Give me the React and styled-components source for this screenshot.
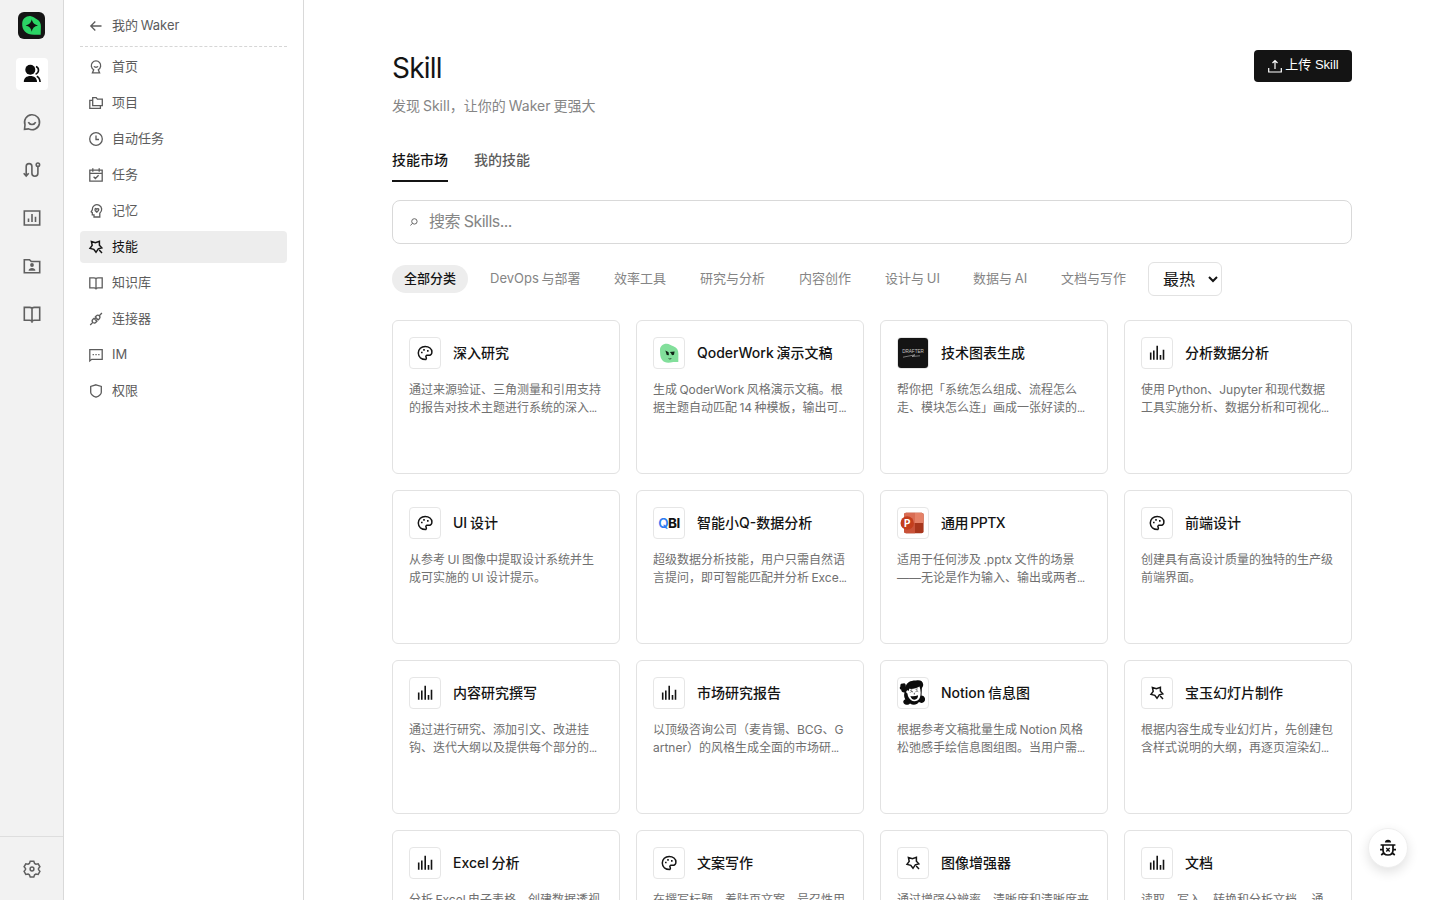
import styled, { createGlobalStyle, css } from "styled-components";

const GlobalStyle = createGlobalStyle`
    * {
        box-sizing: border-box;
    }
    body {
        margin: 0;
        height: 900px;
        overflow: hidden;
        background-color: #ffffff;
        color: #141414;
        font-family: Inter, 'Noto Sans CJK SC', sans-serif;
        word-spacing: -1px;
    }
    button, select, input {
        font-family: inherit;
    }
    h1, h3, p {
        margin: 0;
        font-weight: 400;
    }
`

const menu = [
    { icon: "home", label: "首页" },
    { icon: "folders", label: "项目" },
    { icon: "clock", label: "自动任务" },
    { icon: "calendar", label: "任务" },
    { icon: "memory", label: "记忆" },
    { icon: "skill", label: "技能" },
    { icon: "book", label: "知识库" },
    { icon: "plug", label: "连接器" },
    { icon: "im", label: "IM" },
    { icon: "shield", label: "权限" },
]

const categories = [
    { label: "全部分类" },
    { label: "DevOps 与部署", width: 114 },
    { label: "效率工具" },
    { label: "研究与分析" },
    { label: "内容创作" },
    { label: "设计与 UI", width: 78 },
    { label: "数据与 AI", width: 78 },
    { label: "文档与写作" },
]

const skills = [
    { icon: "palette", title: "深入研究", lines: ["通过来源验证、三角测量和引用支持", "的报告对技术主题进行系统的深入…"] },
    { icon: "qoder", title: "QoderWork 演示文稿", lines: ["生成 QoderWork 风格演示文稿。根", "据主题自动匹配 14 种模板，输出可…"] },
    { icon: "drafter", title: "技术图表生成", lines: ["帮你把「系统怎么组成、流程怎么", "走、模块怎么连」画成一张好读的…"] },
    { icon: "bars", title: "分析数据分析", lines: ["使用 Python、Jupyter 和现代数据", "工具实施分析、数据分析和可视化…"] },
    { icon: "palette", title: "UI 设计", lines: ["从参考 UI 图像中提取设计系统并生", "成可实施的 UI 设计提示。"] },
    { icon: "qbi", title: "智能小Q-数据分析", lines: ["超级数据分析技能，用户只需自然语", "言提问，即可智能匹配并分析 Exce…"] },
    { icon: "ppt", title: "通用 PPTX", tight: true, lines: ["适用于任何涉及 .pptx 文件的场景", "——无论是作为输入、输出或两者…"] },
    { icon: "palette", title: "前端设计", lines: ["创建具有高设计质量的独特的生产级", "前端界面。"] },
    { icon: "bars", title: "内容研究撰写", lines: ["通过进行研究、添加引文、改进挂", "钩、迭代大纲以及提供每个部分的…"] },
    { icon: "bars", title: "市场研究报告", lines: ["以顶级咨询公司（麦肯锡、BCG、G", "artner）的风格生成全面的市场研…"] },
    { icon: "notion", title: "Notion 信息图", lines: ["根据参考文稿批量生成 Notion 风格", "松弛感手绘信息图组图。当用户需…"] },
    { icon: "skill", title: "宝玉幻灯片制作", lines: ["根据内容生成专业幻灯片，先创建包", "含样式说明的大纲，再逐页渲染幻…"] },
    { icon: "bars", title: "Excel 分析", lines: ["分析 Excel 电子表格，创建数据透视"] },
    { icon: "palette", title: "文案写作", lines: ["在撰写标题、着陆页文案、号召性用"] },
    { icon: "skill", title: "图像增强器", lines: ["通过增强分辨率、清晰度和清晰度来"] },
    { icon: "bars", title: "文档", lines: ["读取、写入、转换和分析文档 ，通"] },
]

export default function App() {

    return (
        <>
            <GlobalStyle />
            <Page>
                <Rail>
                    <Logo />
                    <RailButton $active><TeamIcon /></RailButton>
                    <RailButton><ChatIcon /></RailButton>
                    <RailButton><RouteIcon /></RailButton>
                    <RailButton><ChartIcon /></RailButton>
                    <RailButton><ContactIcon /></RailButton>
                    <RailButton><BookIcon /></RailButton>
                    <RailFooter>
                        <SettingsIcon />
                    </RailFooter>
                </Rail>

                <Sidebar>
                    <BackLink>
                        <Icon name="back" />
                        <p>我的 Waker</p>
                    </BackLink>
                    <Menu>
                        {menu.map((i) => (
                            <MenuItem key={i.label} $active={i.icon === "skill"}>
                                <Icon name={i.icon} />
                                <p>{i.label}</p>
                            </MenuItem>
                        ))}
                    </Menu>
                </Sidebar>

                <Main>
                    <Header>
                        <div>
                            <Title>Skill</Title>
                            <Subtitle>发现 Skill，让你的 Waker 更强大</Subtitle>
                        </div>
                        <UploadButton>
                            <UploadIcon />
                            <span>上传 Skill</span>
                        </UploadButton>
                    </Header>

                    <Tabs>
                        <Tab $active>技能市场</Tab>
                        <Tab>我的技能</Tab>
                    </Tabs>

                    <Search>
                        <SearchIcon />
                        <input placeholder="搜索 Skills..." />
                    </Search>

                    <Filters>
                        {categories.map((c, idx) => (
                            <Chip key={c.label} $active={idx === 0} $width={c.width}>{c.label}</Chip>
                        ))}
                        <Sort>
                            <option>最热</option>
                        </Sort>
                    </Filters>

                    <Grid>
                        {skills.map((s) => <SkillCard key={s.title} {...s} />)}
                    </Grid>
                </Main>
            </Page>
            <DebugButton><BugIcon /></DebugButton>
        </>
    )
}

function SkillCard({ icon, title, tight, lines }) {

    return (
        <Card>
            <CardHeader>
                <CardIcon><Icon name={icon} /></CardIcon>
                <CardTitle $tight={tight}>{title}</CardTitle>
            </CardHeader>
            {lines.map((l) => (
                <CardText key={l}>
                    {l.replace("…", "")}
                    {l.endsWith("…") && <Dots>…</Dots>}
                </CardText>
            ))}
        </Card>
    )
}

function Icon({ name }) {
    if (name === "qoder") return <QoderIcon />
    if (name === "drafter") return <DrafterIcon />
    if (name === "qbi") return <QbiIcon />
    if (name === "ppt") return <PptIcon />
    if (name === "notion") return <NotionIcon />

    return (
        <svg width="16" height="16" viewBox="0 0 16 16" fill="none" stroke="currentColor" strokeWidth="1.3">
            {shapes[name]}
        </svg>
    )
}

const shapes = {
    back: <path d="M13.5 8H3M7.3 3.5 2.8 8l4.5 4.5" />,
    home: <path d="M5.7 10.7a4.7 4.7 0 1 1 4.6 0l1.3 3.2H4.4zM6 7.2c.8 1.4 3.2 1.4 4 0" />,
    folders: <path d="M4.7 2.6h3.5l1.2 1.5h4.9v6.6H4.7zM4.7 5.4H1.8v7.9h10.6v-2.6" />,
    clock: <path d="M8 1.7a6.3 6.3 0 1 0 0 12.6A6.3 6.3 0 0 0 8 1.7zM8 4.5v4h3" />,
    calendar: <path d="M1.8 3.2h12.4v10.9H1.8zM1.8 6.3h12.4M4.8 1.3v3.5M11.2 1.3v3.5M5.6 9.7l1.8 1.8 3.2-3.2" />,
    memory: (
        <>
            <path d="M6 14v-2.2H4.3V9.6L3.2 8.8l1.1-2a4.7 4.7 0 1 1 7.5 3.4V14z" />
            <path d="M8.8 9.3C7.3 8.3 6.7 7.3 7 6.2c.4-1 1.5-.8 1.8 0 .4-.9 1.7-.9 2 0 .2 1-.5 2-2 3.1z" />
        </>
    ),
    skill: <path strokeWidth="1.5" d="M3.4 2.5 7.4 3.6l4-1.4v4l2.4 2.6-3.5 1.1L8 13.3l-2.2-3L2 9.4l2.2-3zM11.2 11l2.8 2.9" />,
    book: <path d="M8 3.5C7.4 3 6.7 2.8 6 2.8H1.8v10.1H6c.8 0 1.5.2 2 .7.5-.5 1.2-.7 2-.7h4.2V2.8H10c-.7 0-1.4.2-2 .7zM8 3.5v11" />,
    plug: <path d="m2.2 14 2.6-2.6M11.3 4.8 13.9 2M4.8 11.4c-1.2-1.4-.6-2.5.2-3.2l1-.9 2.9 2.9-1 1c-.8.8-2 1.3-3.1.2zM11.3 4.8c1.2 1.3.6 2.4-.2 3.2l-.9.9L7.3 6l.9-1c.9-.9 2-1.2 3.1-.2zM6.8 8.1l1.1-1.2M8.2 9.4l1.2-1.2" />,
    im: <path d="M1.8 2.6h12.4v9.7H3.7l-1.9 1.6zM4.6 7.6h1.3M7.4 7.6h1.3M10.2 7.6h1.3" />,
    shield: <path d="m8 1.8 5.3 1.6v5.8c0 2.2-2.2 3.8-5.3 5-3.1-1.2-5.3-2.8-5.3-5V3.4z" />,
    bars: <path strokeWidth="1.6" d="M1.7 14.8V7.5M4.8 14.8V5.4M8.2 14.8V.7M11.5 14.8V10M14.5 14.8V4.7" />,
    palette: (
        <>
            <path strokeWidth="1.5" d="M8.7 14.6c-4-.2-7.4-2.4-7.4-6.5 0-3.8 3-6.7 6.9-6.7 3.8 0 6.7 2.5 6.7 5.5 0 2-1.5 3.4-3.5 3.4H9.6c-1 .5-.9 1.3-.4 2.1.3.6.1 1.7-.5 2.2z" />
            <path strokeWidth="1.7" d="M4 7.5h1.6M6.2 4.8h1.6M10 5.8h1.6" />
        </>
    ),
}

function Logo() {
    return (
        <LogoBox>
            <svg width="27" height="27" viewBox="0 0 27 27">
                <path fill="#2bd565" d="M4.2 11.5C4.4 6.5 8.5 3.6 13 4.2c2.3.3 4 2 6.2 3.2 2.7 1.6 3.8 4 3.7 7.2l-.2 8.2-5.4-.1c-5.1.1-7.9-.4-10.4-3.2-2-2.1-2.9-4.8-2.7-8z" />
                <path fill="#101010" d="M13.8 7.3c.8 3.6 2.3 5.2 6.2 6.2-3.9 1-5.4 2.5-6.2 6.3-.9-3.8-2.3-5.3-6.2-6.3 3.9-1 5.3-2.6 6.2-6.2z" />
            </svg>
        </LogoBox>
    )
}

function TeamIcon() {
    return (
        <svg width="20" height="20" viewBox="0 0 20 20" fill="#0c0c0c">
            <circle cx="8.3" cy="5.8" r="5" />
            <path d="M1.8 18c0-4 2.7-6 6.6-6s6.6 2 6.6 6z" />
            <path d="M14 2.5c3.4 1.3 3.4 6.4-.4 7.7M14.8 12.3c2.2 1 3 3 3.3 5.7" fill="none" stroke="#0c0c0c" strokeWidth="1.6" />
        </svg>
    )
}

function ChatIcon() {
    return (
        <svg width="20" height="20" viewBox="0 0 20 20" fill="none" stroke="currentColor" strokeWidth="1.6">
            <path d="M2.5 17.3 3 12.8a7.5 7.5 0 1 1 3.6 4.1z" />
            <path d="M6.3 10.2c1.4 3 6 3 7.4 0" />
        </svg>
    )
}

function RouteIcon() {
    return (
        <svg width="20" height="20" viewBox="0 0 20 20" fill="none" stroke="currentColor" strokeWidth="1.6">
            <path d="M4.2 16V6.5c0-3.9 5.7-3.9 5.7 0v6.8c0 3.9 6 3.9 6 0V6.5M1.7 13.2 4.2 16l2.5-2.8" />
            <circle cx="15.9" cy="4.7" r="1.7" />
        </svg>
    )
}

function ChartIcon() {
    return (
        <svg width="20" height="20" viewBox="0 0 20 20" fill="none" stroke="currentColor" strokeWidth="1.6">
            <path d="M2.3 3h15.4v14H2.3zM6.5 14v-3.5M10 14V6M13.5 14V8.7" />
        </svg>
    )
}

function ContactIcon() {
    return (
        <svg width="20" height="20" viewBox="0 0 20 20" fill="none" stroke="currentColor" strokeWidth="1.6">
            <path d="M2.3 3.7h5.2L9.3 5.5h8.4v11.2H2.3z" />
            <circle cx="10" cy="9" r="1.9" fill="currentColor" stroke="none" />
            <path d="M6.6 14.7c0-3.7 6.8-3.7 6.8 0z" fill="currentColor" stroke="none" />
        </svg>
    )
}

function BookIcon() {
    return (
        <svg width="20" height="20" viewBox="0 0 20 20" fill="none" stroke="currentColor" strokeWidth="1.6">
            <path d="M10 4.2c-.7-.6-1.5-.8-2.4-.8H2.3v12.8h5.3c.9 0 1.7.3 2.4.9.7-.6 1.5-.9 2.4-.9h5.3V3.4h-5.3c-.9 0-1.7.2-2.4.8zM10 4.2v14.5" />
        </svg>
    )
}

function SettingsIcon() {
    return (
        <svg width="20" height="20" viewBox="0 0 20 20" fill="none" stroke="currentColor" strokeWidth="1.5">
            <path d="M8.2 2.2h3.6l.8 2.2 1.3.8 2.3-.4 1.7 3-1.4 1.8v1l1.4 1.8-1.7 3-2.3-.4-1.3.8-.8 2.1H8.2l-.8-2.1-1.3-.8-2.3.4-1.7-3 1.4-1.8v-1L2.1 7.8l1.7-3 2.3.4 1.3-.8z" />
            <circle cx="10" cy="10" r="1.9" />
        </svg>
    )
}

function UploadIcon() {
    return (
        <svg width="16" height="16" viewBox="0 0 16 16" fill="none" stroke="currentColor" strokeWidth="1.2">
            <path d="M1.7 10v4h12.6v-4M8 11V2.7M5.5 5 8 2.5 10.5 5" />
        </svg>
    )
}

function SearchIcon() {
    return (
        <svg width="10" height="12" viewBox="0 0 10 12" fill="none" stroke="#666666" strokeWidth="1">
            <circle cx="5.4" cy="5.4" r="2.7" />
            <path d="M3.6 7.3 1.4 9.4" />
        </svg>
    )
}

function BugIcon() {
    return (
        <svg width="20" height="20" viewBox="0 0 20 20" fill="none" stroke="#111111" strokeWidth="1.7">
            <path d="M6.9 4.6a3.1 2.9 0 0 1 6.2 0z" fill="#111111" stroke="none" />
            <path d="M5 7h10v5c0 3-2 5-5 5s-5-2-5-5zM2.6 7h14.8M2 11.7h3M15 11.7h3M3.2 17l2.6-2M16.8 17l-2.6-2" />
            <path strokeWidth="1.4" d="m8.3 10.1 3.4 3.4M11.7 10.1l-3.4 3.4" />
        </svg>
    )
}

function QoderIcon() {
    return (
        <svg width="30" height="30" viewBox="0 0 30 30">
            <path fill="#82df9b" d="M6 12C5.8 8.3 9.2 5.6 12.8 5.8c2.4.2 4 1.5 6.6 2.5 3.5 1.3 5 3.8 5 7.5l-.1 8.1h-5c-5.3 1.4-9.1.8-11.2-2-2.3-3-1.9-6-2.1-9.9z" />
            <path fill="#102316" d="m11.4 12.6 3.2 1.7.3 3-2.2-.4zM15.8 14l4.8-.4-.6 3.2-2 .5-1-2z" />
            <path fill="none" stroke="#102316" strokeWidth=".8" d="M14.6 20.5c1.2.8 2.2.5 2.9-.5" />
        </svg>
    )
}

function DrafterIcon() {
    return (
        <DarkTile>
            <span>DRAFTER</span>
            <svg width="20" height="4" viewBox="0 0 20 4" fill="none" stroke="#bdbdbd" strokeWidth=".6">
                <path d="M0 3.2 12 .8 9 2.5l8-.7" />
            </svg>
        </DarkTile>
    )
}

function QbiIcon() {
    return (
        <QbiText>
            <b>Q</b>BI
        </QbiText>
    )
}

function PptIcon() {
    return (
        <PptTile>
            <svg width="26" height="24" viewBox="0 0 26 24">
                <rect x="4" y="1.7" width="19.6" height="20.6" rx="2" fill="#a8361c" />
                <path d="M4 3.7a2 2 0 0 1 2-2h9V12H4z" fill="#d96d54" />
                <path d="M15 1.7h6.6a2 2 0 0 1 2 2V12H15z" fill="#e58268" />
                <path d="M4 12h11v10.3H6a2 2 0 0 1-2-2z" fill="#c95238" />
                <circle cx="7.2" cy="12" r="6.7" fill="#c43e1c" />
            </svg>
            <span>P</span>
        </PptTile>
    )
}

function NotionIcon() {
    return (
        <svg width="30" height="30" viewBox="0 0 30 30">
            <path fill="#0b0b0b" d="M7.6 9C8.4 4.4 13 2.4 18 2.6c4-.9 7 .6 7.2 4 .2 1.6-.7 2.7-1.3 3.4l-.4 7.6c2.6.2 4.2 2.6 3.4 5-.9 2.4-3.9 3-6 1.5-2 3.1-6 3.5-8.9 1.4-1.2 1.7-4.7 1.8-6.3-.2-1-1.6-.3-3.6 1.6-4.1-1.3-2-1.5-4.6-.8-6.8C4.700 14.600 3 13.200 3.300 11.700 1.600 11.300 1.200 9.200 2.500 8.200 1.800 6.500 3.500 5 5 5.800 6.400 4.500 8.500 6.100 7.600 9z" />
            <path fill="#fff" d="M11.200 10.800c3.800.4 7.400-.5 10.300-2.400 1.400 4 1.700 8.400.2 11.500-1.600 3.300-5.900 4.300-8.800 2.100-2.200-1.600-3.300-4-3.400-6.400-1.500-.5-1.700-2.800-.3-3.200.9-.2 1.500.2 1.600.9z" />
            <path d="M12.200 14.500c.7-1.100 2-1.200 2.800-.4M17.600 13.700c.7-.9 1.900-.9 2.600-.1M16.300 14.800v1.700M12.300 12.400l1.900-.6M17.700 11.400l1.900-.5" fill="none" stroke="#0b0b0b" strokeWidth=".7" />
            <path fill="#0b0b0b" d="M12.400 18c2.600.4 5.300.1 7.700-.8 0 2.500-1.400 4.400-3.600 4.500-2 0-3.500-1.500-4.100-3.700z" />
        </svg>
    )
}

const Page = styled.div`
    display: flex;
    height: 900px;
`

const Rail = styled.div`
    width: 64px;
    flex-shrink: 0;
    display: flex;
    flex-direction: column;
    align-items: center;
    gap: 16px;
    padding-top: 12px;
    background-color: #f2f2f2;
    border-right: 1px solid #d9d9d9;
`

const LogoBox = styled.div`
    width: 27px;
    height: 27px;
    border-radius: 6px;
    background-color: #151515;
    margin-bottom: 3px;
`

const RailButton = styled.div`
    width: 32px;
    height: 32px;
    display: flex;
    align-items: center;
    justify-content: center;
    border-radius: 4px;
    color: #606060;
    background-color: ${props => props.$active ? "#ffffff" : "transparent"};
`

const RailFooter = styled.div`
    margin-top: auto;
    width: 100%;
    height: 64px;
    display: flex;
    align-items: center;
    justify-content: center;
    border-top: 1px solid #dedede;
    color: #606060;
`

const Sidebar = styled.div`
    width: 240px;
    flex-shrink: 0;
    padding: 5px 16px;
    border-right: 1px solid #d9d9d9;
`

const row = css`
    display: flex;
    align-items: center;
    gap: 8px;
    padding: 0 8px;
    font-size: 13px;
    color: #5c5c5c;
    p {
        height: 20px;
        line-height: 18px;
    }
`

const BackLink = styled.div`
    ${row}
    height: 42px;
    border-bottom: 1px dashed #d6d6d6;
`

const Menu = styled.div`
    display: flex;
    flex-direction: column;
    gap: 4px;
    margin-top: 4px;
`

const MenuItem = styled.div`
    ${row}
    height: 32px;
    border-radius: 4px;
    ${props => props.$active && css`
        color: #141414;
        background-color: #ededed;
    `}
`

const Main = styled.div`
    width: 960px;
    margin-left: 88px;
    padding-top: 50px;
`

const Header = styled.div`
    display: flex;
    justify-content: space-between;
    align-items: flex-start;
    height: 94px;
`

const Title = styled.h1`
    font-size: 28px;
    line-height: 36px;
    letter-spacing: -0.8px;
`

const Subtitle = styled.p`
    margin-top: 10px;
    font-size: 14px;
    line-height: 20px;
    color: #858585;
`

const UploadButton = styled.button`
    width: 98px;
    height: 32px;
    display: flex;
    align-items: center;
    justify-content: center;
    gap: 2px;
    padding: 0;
    border: none;
    border-radius: 4px;
    background-color: #141414;
    color: #ffffff;
    font-family: 'Liberation Sans', 'Noto Sans CJK SC', sans-serif;
    font-size: 13px;
    span {
        height: 20px;
        line-height: 18px;
    }
`

const Tabs = styled.div`
    display: flex;
    gap: 26px;
    height: 38px;
`

const Tab = styled.div`
    height: 38px;
    padding-top: 6px;
    font-size: 14px;
    font-weight: 500;
    line-height: 20px;
    color: ${props => props.$active ? "#141414" : "#5c5c5c"};
    border-bottom: 2px solid ${props => props.$active ? "#141414" : "transparent"};
`

const Search = styled.div`
    display: flex;
    align-items: center;
    gap: 10px;
    height: 44px;
    margin-top: 18px;
    padding: 0 16px;
    border: 1px solid #d9d9d9;
    border-radius: 8px;
    input {
        flex: 1;
        padding: 0 0 2px;
        border: none;
        outline: none;
        font-size: 16px;
        letter-spacing: -0.55px;
    }
    input::placeholder {
        color: #858585;
    }
`

const Filters = styled.div`
    display: flex;
    align-items: center;
    gap: 10px;
    height: 34px;
    margin-top: 18px;
`

const Chip = styled.div`
    width: ${props => props.$width ? props.$width + "px" : "auto"};
    height: 28px;
    padding: 0 12px;
    border-radius: 14px;
    font-size: 13px;
    line-height: 27px;
    white-space: nowrap;
    color: ${props => props.$active ? "#141414" : "#858585"};
    font-weight: ${props => props.$active ? 500 : 400};
    background-color: ${props => props.$active ? "#ededed" : "transparent"};
`

const Sort = styled.select`
    width: 74px;
    height: 34px;
    padding: 0 0 0 10px;
    border: 1px solid #e2e2e2;
    border-radius: 6px;
    background-color: #ffffff;
    color: #141414;
    font-size: 16px;
`

const Grid = styled.div`
    display: grid;
    grid-template-columns: repeat(4, 228px);
    grid-auto-rows: 154px;
    gap: 16px;
    margin-top: 24px;
`

const Card = styled.div`
    padding: 16px;
    border: 1px solid #e2e2e2;
    border-radius: 6px;
    background-color: #ffffff;
`

const CardHeader = styled.div`
    display: flex;
    align-items: center;
    gap: 12px;
    margin-bottom: 12px;
`

const CardIcon = styled.div`
    width: 32px;
    height: 32px;
    display: flex;
    align-items: center;
    justify-content: center;
    flex-shrink: 0;
    border: 1px solid #e6e6e6;
    border-radius: 4px;
    overflow: hidden;
`

const CardTitle = styled.h3`
    font-size: 14px;
    font-weight: 500;
    line-height: 20px;
    white-space: nowrap;
    letter-spacing: ${props => props.$tight ? "-0.5px" : "normal"};
`

const CardText = styled.p`
    font-size: 12px;
    line-height: 18px;
    white-space: nowrap;
    color: #707070;
`

// Roboto has the narrower ellipsis
const Dots = styled.span`
    font-family: Roboto, sans-serif;
`

const DarkTile = styled.div`
    width: 30px;
    height: 30px;
    display: flex;
    flex-direction: column;
    align-items: center;
    justify-content: center;
    background-color: #141414;
    span {
        font-family: 'Liberation Sans', sans-serif;
        font-size: 4.6px;
        line-height: 5px;
        color: #c4c4c4;
    }
`

const QbiText = styled.div`
    font-size: 13.5px;
    font-weight: 700;
    letter-spacing: -0.5px;
    color: #111111;
    b {
        font-weight: 600;
        color: #2f7cf0;
    }
`

const PptTile = styled.div`
    position: relative;
    width: 26px;
    height: 24px;
    span {
        position: absolute;
        left: 4px;
        top: 6px;
        font-size: 10px;
        font-weight: 700;
        line-height: 12px;
        color: #ffffff;
    }
`

const DebugButton = styled.div`
    position: fixed;
    right: 32px;
    bottom: 32px;
    width: 40px;
    height: 40px;
    display: flex;
    align-items: center;
    justify-content: center;
    border: 1px solid #eeeeee;
    border-radius: 50%;
    background-color: #ffffff;
    box-shadow: 0 4px 12px rgba(0, 0, 0, 0.12);
`
